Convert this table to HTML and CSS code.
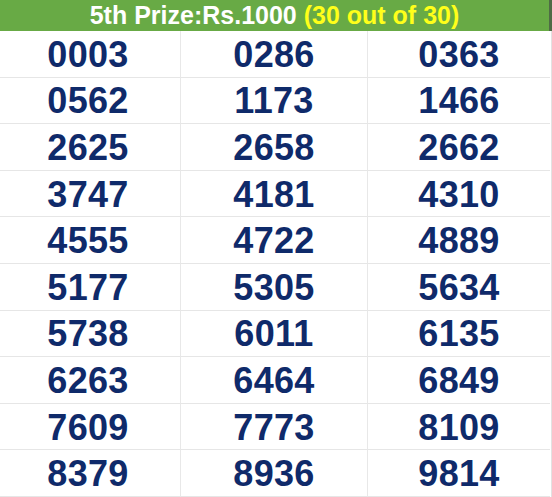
FILE: index.html
```html
<!DOCTYPE html>
<html>
<head>
<meta charset="utf-8">
<link rel="stylesheet" href="styles.css">
</head>
<body>
<div class="sheet">
  <div class="header"><span class="title">5th Prize:Rs.1000</span> <span class="count">(30 out of 30)</span></div>
  <div class="grid">
    <div class="cell">0003</div><div class="cell">0286</div><div class="cell">0363</div>
    <div class="cell">0562</div><div class="cell">1173</div><div class="cell">1466</div>
    <div class="cell">2625</div><div class="cell">2658</div><div class="cell">2662</div>
    <div class="cell">3747</div><div class="cell">4181</div><div class="cell">4310</div>
    <div class="cell">4555</div><div class="cell">4722</div><div class="cell">4889</div>
    <div class="cell">5177</div><div class="cell">5305</div><div class="cell">5634</div>
    <div class="cell">5738</div><div class="cell">6011</div><div class="cell">6135</div>
    <div class="cell">6263</div><div class="cell">6464</div><div class="cell">6849</div>
    <div class="cell">7609</div><div class="cell">7773</div><div class="cell">8109</div>
    <div class="cell">8379</div><div class="cell">8936</div><div class="cell">9814</div>
  </div>
</div>
</body>
</html>
```
FILE: styles.css
```css
html, body {
  margin: 0;
  padding: 0;
  background: #ffffff;
}
.sheet {
  width: 552px;
  height: 497px;
  overflow: hidden;
  font-family: "Liberation Sans", Arial, sans-serif;
}
.header {
  height: 31px;
  box-sizing: border-box;
  background: #68aa45;
  border-right: 3px solid #4f6b45;
  width: 552px;
  text-align: center;
  font-weight: bold;
  font-size: 25px;
  line-height: 30px;
  color: #ffffff;
  white-space: nowrap;
}
.count {
  color: #ffff1a;
}
.grid {
  display: grid;
  grid-template-columns: 181px 187px 182px;
  grid-auto-rows: 46.6px;
  width: 551px;
  border-right: 1px solid #e2e2e2;
}
.cell {
  box-sizing: border-box;
  border-bottom: 1px solid #e6e6e6;
  border-right: 1px solid #e8e8e8;
  display: flex;
  align-items: center;
  justify-content: center;
  font-weight: bold;
  font-size: 36px;
  letter-spacing: 0.3px;
  color: #0f2a6a;
  padding-top: 2px;
}
.cell:nth-child(3n+1) {
  padding-right: 4px;
}
.cell:nth-child(3n) {
  border-right: none;
}
```
